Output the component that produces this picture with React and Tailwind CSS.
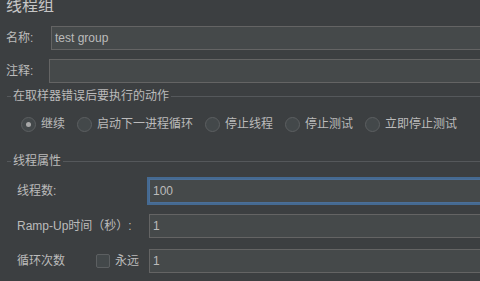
export default function App() {
  const input =
    "flex-1 -mr-[6px] h-[24px] bg-[#45494a] border border-[#646464] pl-[3px] flex items-center text-[#bbbbbb]";
  const Radio = ({ checked, label, first }) => (
    <div className={"flex items-center gap-[5px] " + (first ? "" : "ml-[12px]")}>
      <div className="w-[15px] h-[15px] rounded-full border border-[#5c5f61] bg-[#43484a] flex items-center justify-center">
        {checked && <div className="w-[5px] h-[5px] rounded-full bg-[#a8a8a8]" />}
      </div>
      <span className="leading-[15px] whitespace-nowrap">{label}</span>
    </div>
  );
  const Header = ({ text }) => (
    <div className="h-[14px] flex items-center pl-[7px]">
      <div className="w-[4px] h-px bg-[#55585b]" />
      <span className="px-[2px] leading-[14px] whitespace-nowrap">{text}</span>
      <div className="flex-1 h-px bg-[#55585b]" />
    </div>
  );
  return (
    <div className="w-[480px] h-[281px] overflow-hidden bg-[#3c3f41] text-[#bbbbbb] text-[12px] font-['Liberation_Sans','Noto_Sans_CJK_SC',sans-serif] flex flex-col">
      <div className="h-[16px] mt-[-2px] pl-[6px] text-[16px] leading-[16px] text-[#c6c6c6]">线程组</div>
      <div className="mt-[12px] flex items-center h-[24px]">
        <span className="w-[51px] pl-[6px] whitespace-nowrap">名称:</span>
        <div className={input}>test group</div>
      </div>
      <div className="mt-[9px] flex items-center h-[24px]">
        <span className="w-[49px] pl-[6px] whitespace-nowrap">注释:</span>
        <div className={input}></div>
      </div>
      <div className="mt-[6px]">
        <Header text="在取样器错误后要执行的动作" />
      </div>
      <div className="mt-[14px] h-[15px] pl-[21px] flex items-center">
        <Radio first checked label="继续" />
        <Radio label="启动下一进程循环" />
        <Radio label="停止线程" />
        <Radio label="停止测试" />
        <Radio label="立即停止测试" />
      </div>
      <div className="mt-[22px]">
        <Header text="线程属性" />
      </div>
      <div className="mt-[11px] flex items-center h-[24px]">
        <span className="w-[149px] pl-[17px] whitespace-nowrap">线程数:</span>
        <div className={input + " !border-[#4b6f98] shadow-[0_0_0_2px_#456a92]"}>100</div>
      </div>
      <div className="mt-[11px] flex items-center h-[24px]">
        <span className="w-[149px] pl-[17px] whitespace-nowrap">Ramp-Up时间（秒）:</span>
        <div className={input}>1</div>
      </div>
      <div className="mt-[11px] flex items-center h-[24px]">
        <div className="w-[149px] pl-[17px] flex items-center whitespace-nowrap">
          <span>循环次数</span>
          <div className="ml-[31px] w-[14px] h-[14px] rounded-[2px] border border-[#5c5f61] bg-[#43484a]" />
          <span className="ml-[5px]">永远</span>
        </div>
        <div className={input}>1</div>
      </div>
    </div>
  );
}
